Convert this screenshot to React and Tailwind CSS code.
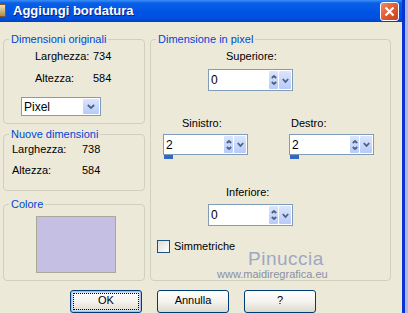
import React from 'react';

const Chev = ({ up = false, w = 7, h = 4 }) => (
  <svg width={w} height={h + 1} viewBox={`0 0 ${w} ${h + 1}`} className="block">
    <polyline
      points={up ? `0.8,${h} ${w / 2},1 ${w - 0.8},${h}` : `0.8,1 ${w / 2},${h} ${w - 0.8},1`}
      fill="none"
      stroke="#4d6185"
      strokeWidth="1.8"
    />
  </svg>
);

const Group = ({ title, className = '', children }) => (
  <fieldset className={`border border-[#d0d0bf] rounded-[4px] ${className}`}>
    <legend className="ml-[5px] px-[2px] text-[#0046d5] leading-[13px]">{title}</legend>
    {children}
  </fieldset>
);

const Spin = ({ value, h = 'h-[22px]', bar = false }) => (
  <div className="flex flex-col">
    <div className={`flex w-[85px] ${h} border border-[#7f9db9] bg-white`}>
      <div className="flex-1 flex items-center pl-[2px] text-[12px] text-black">{value}</div>
      <div className="w-[9px] my-[1px] flex flex-col justify-center items-center gap-[2px] bg-gradient-to-b from-[#dbe5fd] to-[#b7cbf8] rounded-[1px]">
        <Chev up w={6} h={3} />
        <Chev w={6} h={3} />
      </div>
      <div className="w-[12px] m-[1px] flex items-center justify-center bg-gradient-to-b from-[#dbe5fd] to-[#b7cbf8] rounded-[1px]">
        <Chev w={7} h={4} />
      </div>
    </div>
    {bar && <div className="w-[9px] h-[4px] bg-[#316ac5] ml-[1px]" />}
  </div>
);

const XpButton = ({ label, focus = false }) => (
  <div
    className={`w-[72px] h-[23px] rounded-[3px] border border-[#003c74] bg-gradient-to-b from-[#ffffff] via-[#f4f3ee] to-[#dcd9cc] flex items-center justify-center p-[1px] ${
      focus ? 'shadow-[inset_0_0_0_1px_#a9c1f0,inset_0_0_0_2px_#cedcf6]' : ''
    }`}
  >
    <div
      className={`w-full h-full flex items-center justify-center pb-[2px] ${
        focus ? 'outline-1 outline-dotted outline-black -outline-offset-[2px]' : ''
      }`}
    >
      {label}
    </div>
  </div>
);

export default function App() {
  return (
    <div className="w-[408px] h-[313px] overflow-hidden flex font-['Liberation_Sans',Arial,sans-serif] text-[11px] text-black">
      <div className="w-[402px] flex flex-col">
        {/* title bar */}
        <div className="h-[24px] flex items-center bg-[linear-gradient(to_bottom,#3d8ef7_0%,#0a5fe6_14%,#0055e5_50%,#0050dd_85%,#0040c4_100%)]">
          <div className="w-[6px] h-[13px] mb-[2px] bg-gradient-to-b from-[#f3e3b8] to-[#b08a4c] rounded-r-[1px] border-y border-r border-[#7a5a2a]" />
          <div className="ml-[7px] text-white font-bold text-[13px] [text-shadow:1px_1px_0_#0a1e8a]">
            Aggiungi bordatura
          </div>
          <div className="ml-auto mr-[3px] w-[19px] h-[19px] rounded-[3px] border border-white bg-gradient-to-br from-[#f08a6a] via-[#e15b32] to-[#c5401c] flex items-center justify-center">
            <svg width="11" height="11" viewBox="0 0 11 11">
              <path d="M1.5 1.5 L9.5 9.5 M9.5 1.5 L1.5 9.5" stroke="#fff" strokeWidth="2.2" />
            </svg>
          </div>
        </div>

        {/* body */}
        <div className="flex-1 bg-[#ece9d8] pl-[3px] pt-[11px] flex flex-col">
          <div className="flex gap-[5px]">
            {/* left column */}
            <div className="w-[142px] flex flex-col">
              <Group title="Dimensioni originali" className="h-[91px]">
                <div className="mt-[4px] pl-[31px] flex h-[13px] leading-[13px]">
                  <span className="w-[58px]">Larghezza:</span>
                  <span>734</span>
                </div>
                <div className="mt-[9px] pl-[31px] flex h-[13px] leading-[13px]">
                  <span className="w-[58px]">Altezza:</span>
                  <span>584</span>
                </div>
                <div className="mt-[12px] ml-[17px] w-[80px] h-[19px] border border-[#7f9db9] bg-white flex">
                  <div className="flex-1 flex items-center pl-[2px] text-[12px]">Pixel</div>
                  <div className="w-[16px] m-[1px] flex items-center justify-center bg-gradient-to-b from-[#dbe5fd] to-[#b7cbf8] rounded-[1px]">
                    <Chev w={8} h={4} />
                  </div>
                </div>
              </Group>

              <Group title="Nuove dimensioni" className="h-[63px] mt-[4px]">
                <div className="mt-[2px] pl-[8px] flex h-[13px] leading-[13px]">
                  <span className="w-[70px]">Larghezza:</span>
                  <span>738</span>
                </div>
                <div className="mt-[8px] pl-[8px] flex h-[13px] leading-[13px]">
                  <span className="w-[70px]">Altezza:</span>
                  <span>584</span>
                </div>
              </Group>

              <Group title="Colore" className="h-[83px] mt-[7px]">
                <div className="mt-[5px] ml-[32px] w-[80px] h-[57px] bg-[#c5c0e3] border border-[#aca899]" />
              </Group>
            </div>

            {/* right column */}
            <div className="relative w-[241px]">
              <Group title="Dimensione in pixel" className="h-[248px]">
                <div className="ml-[57px] w-[85px] flex flex-col">
                  <div className="mt-[4px] pl-[18px] h-[13px] leading-[13px]">Superiore:</div>
                  <div className="mt-[6px]">
                    <Spin value="0" />
                  </div>
                </div>

                <div className="flex mt-[26px]">
                  <div className="ml-[12px] w-[85px] flex flex-col">
                    <div className="pl-[19px] h-[13px] leading-[13px]">Sinistro:</div>
                    <div className="mt-[4px]">
                      <Spin value="2" h="h-[21px]" bar />
                    </div>
                  </div>
                  <div className="ml-[41px] w-[85px] flex flex-col">
                    <div className="pl-[2px] h-[13px] leading-[13px]">Destro:</div>
                    <div className="mt-[4px]">
                      <Spin value="2" h="h-[21px]" bar />
                    </div>
                  </div>
                </div>

                <div className="ml-[57px] w-[85px] flex flex-col">
                  <div className="mt-[27px] pl-[18px] h-[13px] leading-[13px]">Inferiore:</div>
                  <div className="mt-[5px]">
                    <Spin value="0" />
                  </div>
                </div>

                <div className="mt-[14px] ml-[6px] flex items-center gap-[4px]">
                  <div className="w-[13px] h-[13px] border border-[#1c5180] bg-gradient-to-br from-[#dcdcd7] to-[#ffffff]" />
                  <span className="leading-[13px]">Simmetriche</span>
                </div>
              </Group>

              {/* watermark */}
              <div className="absolute left-[98px] top-[216px] text-[19px] leading-[19px] tracking-[0.5px] text-[#a0a7c2] pointer-events-none">
                Pinuccia
              </div>
              <div className="absolute left-[67px] top-[236px] text-[11px] leading-[11px] text-[#8a8fa6] pointer-events-none">
                www.maidiregrafica.eu
              </div>
            </div>
          </div>

          {/* buttons */}
          <div className="mt-[9px] ml-[67px] flex gap-[15px]">
            <XpButton label="OK" focus />
            <XpButton label="Annulla" />
            <XpButton label="?" />
          </div>
        </div>
      </div>
      <div className="w-[3px] bg-[#0b33cf]" />
      <div className="w-[3px] bg-[#aab8ee]" />
    </div>
  );
}
